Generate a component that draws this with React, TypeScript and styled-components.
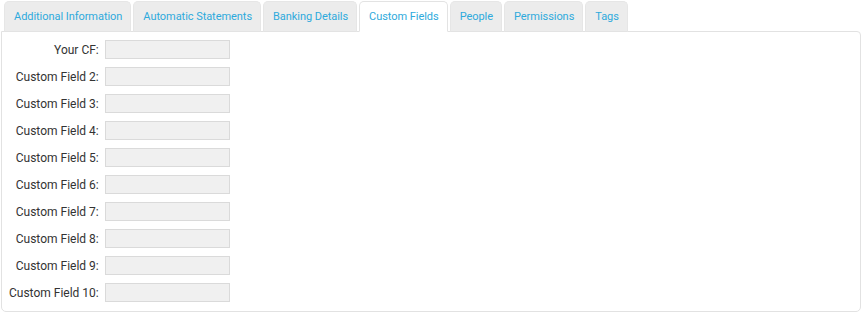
import styled, { createGlobalStyle } from "styled-components"

const GlobalStyle = createGlobalStyle`
	body {
		margin: 0;
		background: #ffffff;
		font-family: Roboto, "Liberation Sans", sans-serif;
	}
`

const tabs = [
	"Additional Information",
	"Automatic Statements",
	"Banking Details",
	"Custom Fields",
	"People",
	"Permissions",
	"Tags",
]

const fields = [
	"Your CF:",
	"Custom Field 2:",
	"Custom Field 3:",
	"Custom Field 4:",
	"Custom Field 5:",
	"Custom Field 6:",
	"Custom Field 7:",
	"Custom Field 8:",
	"Custom Field 9:",
	"Custom Field 10:",
]

const App = () => {
	return (
		<Wrapper>
			<GlobalStyle />
			<TabBar>
				{tabs.map((t) => (
					<Tab key={t} $active={t === "Custom Fields"}>
						{t}
					</Tab>
				))}
			</TabBar>
			<Panel>
				<Form>
					{fields.map((f) => (
						<Row key={f}>
							<Label>{f}</Label>
							<Input type="text" />
						</Row>
					))}
				</Form>
			</Panel>
		</Wrapper>
	)
}

export default App

const Wrapper = styled.div`
	padding: 1px 2px 0 1px;
	width: 860px;
`

const TabBar = styled.div`
	display: flex;
	gap: 2px;
	padding-left: 3px;
	position: relative;
	z-index: 1;
	margin-bottom: -1px;
`

const Tab = styled.div<{ $active?: boolean }>`
	box-sizing: border-box;
	height: 31px;
	padding: 0 8px 0 9px;
	display: flex;
	align-items: center;
	font-size: 11px;
	letter-spacing: -0.05px;
	color: #2eaadc;
	background: ${(p) => (p.$active ? "#ffffff" : "#ececec")};
	border: 1px solid ${(p) => (p.$active ? "#e3e3e3" : "#e6e6e6")};
	border-bottom-color: ${(p) => (p.$active ? "#ffffff" : "#e3e3e3")};
	border-radius: 5px 5px 0 0;
	cursor: pointer;
`

const Panel = styled.div`
	border: 1px solid #e2e2e2;
	border-radius: 0 4px 5px 5px;
	padding: 8px 6px 9px 7px;
	background: #ffffff;
`

const Form = styled.div`
	display: grid;
	grid-template-columns: auto 125px;
	column-gap: 6px;
	row-gap: 8px;
	justify-content: start;
`

const Row = styled.div`
	display: contents;
`

const Label = styled.label`
	font-size: 12px;
	color: #333333;
	text-align: right;
	align-self: center;
	white-space: nowrap;
`

const Input = styled.input`
	box-sizing: border-box;
	width: 125px;
	height: 19px;
	margin: 0;
	border: 1px solid #dadada;
	background: #f0f0f0;
	padding: 0 4px;
	font-size: 12px;
	outline: none;
`
